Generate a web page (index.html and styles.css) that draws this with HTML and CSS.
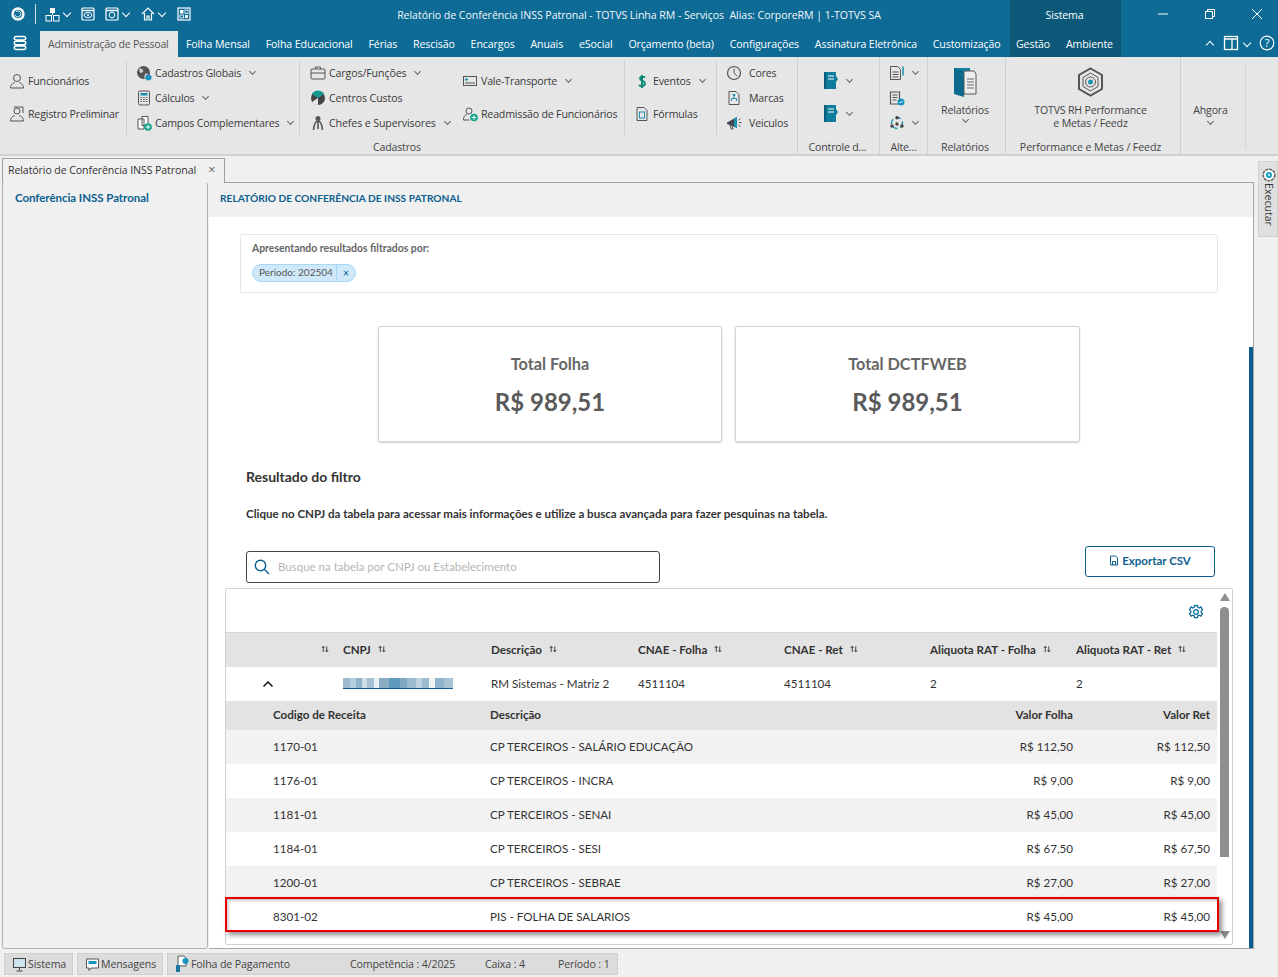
FILE: index.html
```html
<!DOCTYPE html>
<html lang="pt-BR">
<head>
<meta charset="utf-8">
<title>Relatório de Conferência INSS Patronal</title>
<link rel="stylesheet" href="styles.css">
</head>
<body>
<svg class="defs" width="0" height="0" aria-hidden="true">
  <symbol id="sort" viewBox="0 0 9 9"><path d="M2.5 8V2M1 3.4 2.5 1.4 4 3.4M6.5 1.5V7.5M5 5.8 6.5 7.8 8 5.8" fill="none" stroke="#333" stroke-width="1"/></symbol>
  <symbol id="book" viewBox="0 0 16 20"><path d="M1 1h12v17H1z" fill="#0f7c9e"/><path d="M1 1h2v17H1z" fill="#0a5c78"/><path d="M5 5h6M5 8h6" stroke="#fff"/><path d="M13 5l2 3-2 3z" fill="#0f7c9e"/></symbol>
</svg>
<div class="app">
  <header class="chrome">
    <div class="titlebar">
      <div class="quick">
        <svg class="ql-logo" width="16" height="16" viewBox="0 0 16 16"><circle cx="8" cy="8" r="5.500" fill="none" stroke="#fff" stroke-width="2.400"/><path d="M6 5.500a3 3 0 1 1-1.200 3" fill="none" stroke="#fff" stroke-width="1"/></svg>
        <span class="ql-sep"></span>
        <svg class="ql-a" width="15" height="15" viewBox="0 0 15 15"><rect x="5" y="1" width="5" height="5" fill="#fff"/><rect x="1" y="8.500" width="5.500" height="5.500" fill="none" stroke="#fff"/><rect x="8.500" y="8.500" width="5.500" height="5.500" fill="none" stroke="#fff"/><path d="M7.500 6v2" stroke="#fff"/></svg>
        <span class="chev light"></span>
        <svg class="ql-b" width="14" height="14" viewBox="0 0 14 14"><rect x="1" y="1" width="12" height="12" rx="1" fill="none" stroke="#fff" stroke-width="1.200"/><path d="M1 3.500h12" stroke="#fff" stroke-width="1.500"/><ellipse cx="7" cy="8" rx="4" ry="2.500" fill="none" stroke="#fff"/><circle cx="7" cy="8" r="1" fill="#fff"/></svg>
        <svg class="ql-c" width="14" height="14" viewBox="0 0 14 14"><rect x="1" y="1" width="12" height="12" rx="1" fill="none" stroke="#fff" stroke-width="1.200"/><path d="M1 3.500h12" stroke="#fff" stroke-width="1.500"/><circle cx="7" cy="8" r="2.800" fill="none" stroke="#fff"/></svg>
        <span class="chev light"></span>
        <svg class="ql-d" width="14" height="14" viewBox="0 0 14 14"><path d="M1 7 7 1l6 6M3.500 6v7h2.500V9h2v4h2.500V6" fill="none" stroke="#fff" stroke-width="1.200"/></svg>
        <span class="chev light"></span>
        <svg class="ql-e" width="14" height="14" viewBox="0 0 14 14"><rect x="1" y="1" width="12" height="12" fill="none" stroke="#fff" stroke-width="1.200"/><rect x="3" y="3" width="3.500" height="3.500" fill="#fff"/><rect x="8" y="3" width="3" height="3.500" fill="none" stroke="#fff" stroke-width=".8"/><rect x="3" y="8" width="3.500" height="3" fill="none" stroke="#fff" stroke-width=".8"/><rect x="8" y="8" width="3" height="3" fill="#fff"/></svg>
      </div>
      <div class="doc-title">Relatório de Conferência INSS Patronal - TOTVS Linha RM - Serviços&nbsp; Alias: CorporeRM | 1-TOTVS SA</div>
      <div class="ctx">Sistema</div>
      <div class="winctl">
        <svg width="12" height="12" viewBox="0 0 12 12"><path d="M1 6h10" stroke="#fff"/></svg>
        <svg width="12" height="12" viewBox="0 0 12 12"><rect x="1.500" y="3.500" width="7" height="7" fill="none" stroke="#fff"/><path d="M3.500 3.500v-2h7v7h-2" fill="none" stroke="#fff"/></svg>
        <svg width="12" height="12" viewBox="0 0 12 12"><path d="M1 1l10 10M11 1 1 11" stroke="#fff"/></svg>
      </div>
    </div>
    <nav class="menubar">
      <div class="app-btn"><svg width="14" height="16" viewBox="0 0 14 16"><path d="M3 1.500h8a1.500 1.500 0 0 1 0 3.500H3a1.500 1.500 0 0 1 0-3.500zM3 6.300h8a1.500 1.500 0 0 1 0 3.500H3a1.500 1.500 0 0 1 0-3.500zM3 11h8a1.500 1.500 0 0 1 0 3.500H3A1.500 1.500 0 0 1 3 11z" fill="none" stroke="#fff" stroke-width="1.500"/></svg></div>
      <ul class="menu">
        <li class="active">Administração de Pessoal</li>
        <li>Folha Mensal</li>
        <li>Folha Educacional</li>
        <li>Férias</li>
        <li>Rescisão</li>
        <li>Encargos</li>
        <li>Anuais</li>
        <li>eSocial</li>
        <li>Orçamento (beta)</li>
        <li>Configurações</li>
        <li>Assinatura Eletrônica</li>
        <li>Customização</li>
      </ul>
      <ul class="menu ctx-menu">
        <li>Gestão</li>
        <li>Ambiente</li>
      </ul>
      <div class="menu-right">
        <span class="chev light up"></span>
        <svg width="16" height="16" viewBox="0 0 16 16"><rect x="1.500" y="1.500" width="13" height="13" fill="none" stroke="#fff" stroke-width="1.300"/><path d="M1.500 4h13M9 4v10" stroke="#fff" stroke-width="1.300"/></svg>
        <span class="chev light"></span>
        <svg class="help" width="16" height="16" viewBox="0 0 16 16"><circle cx="8" cy="8" r="6.800" fill="none" stroke="#fff" stroke-width="1.200"/><text x="8" y="11.800" text-anchor="middle" class="qmark">?</text></svg>
      </div>
    </nav>
    <section class="ribbon">
      <div class="rgroup g-cad">
        <div class="rbody">
          <div class="rcol two c1">
            <div class="ritem"><svg width="16" height="16" viewBox="0 0 16 16"><circle cx="8" cy="5" r="3.500" fill="none" stroke="#555"/><path d="M1.500 15c0-4 3-5 4.500-5.500M14.500 15c0-4-3-5-4.500-5.500M1.500 15h13" fill="none" stroke="#555"/></svg>Funcionários</div>
            <div class="ritem"><svg width="16" height="16" viewBox="0 0 16 16"><circle cx="8" cy="5" r="3" fill="none" stroke="#555"/><path d="M5 1h9v6" fill="none" stroke="#555"/><path d="M1.500 15c0-4 3-5 4.500-5.500M14.500 15c0-4-3-5-4.500-5.500M1.500 15h13" fill="none" stroke="#555"/></svg>Registro Preliminar</div>
          </div>
          <div class="rcol three c2">
            <div class="ritem"><svg width="16" height="16" viewBox="0 0 16 16"><circle cx="7.500" cy="7.500" r="6.500" fill="#555"/><path d="M3 4c2-1 3 0 4 1s-1 3-2 3-2-2-2-4zM9 9c2-1 3 0 3 1s-1 3-3 3 0-3 0-4z" fill="#ccc"/><circle cx="12.500" cy="12.500" r="3" fill="#1a93c0"/></svg>Cadastros Globais<span class="chev"></span></div>
            <div class="ritem"><svg width="16" height="16" viewBox="0 0 16 16"><rect x="2.500" y="1" width="11" height="14" rx="1.500" fill="none" stroke="#555"/><rect x="4.500" y="3" width="7" height="2.500" fill="#1a93b0"/><path d="M4.500 7.500h7M4.500 9.500h7M4.500 11.500h7" stroke="#555" stroke-dasharray="1.500 1.200"/></svg>Cálculos<span class="chev"></span></div>
            <div class="ritem"><svg width="16" height="16" viewBox="0 0 16 16"><path d="M2 4h6v10H2zM6 1.500h6v9H6z" fill="#fff" stroke="#555"/><circle cx="12" cy="12" r="3.800" fill="#12a58c"/><path d="M12 9.800v4.400M9.800 12h4.400" stroke="#fff"/></svg>Campos Complementares<span class="chev"></span></div>
          </div>
          <div class="rcol three c3">
            <div class="ritem"><svg width="16" height="16" viewBox="0 0 16 16"><rect x="1" y="4" width="14" height="10" rx="1" fill="none" stroke="#555"/><path d="M5.500 4V2h5v2M1 8h14" fill="none" stroke="#555"/></svg>Cargos/Funções<span class="chev"></span></div>
            <div class="ritem"><svg width="16" height="16" viewBox="0 0 16 16"><circle cx="8" cy="8" r="7" fill="#444"/><path d="M8 8 2 4a7 7 0 0 1 12 0z" fill="#16968f"/><path d="M8 8v7a7 7 0 0 1-6-3z" fill="#e8e8e8"/></svg>Centros Custos</div>
            <div class="ritem"><svg width="16" height="16" viewBox="0 0 16 16"><circle cx="8" cy="3.500" r="2.500" fill="#555"/><path d="M8 6c-3 0-4 4-4.500 9M8 6c3 0 4 4 4.500 9M8 7v7" fill="none" stroke="#555" stroke-width="1.600"/></svg>Chefes e Supervisores<span class="chev"></span></div>
          </div>
          <div class="rcol two c4">
            <div class="ritem"><svg width="16" height="16" viewBox="0 0 16 16"><rect x="1.500" y="3.500" width="13" height="9" fill="none" stroke="#555"/><rect x="3" y="5.500" width="3" height="2" fill="#1a93b0"/><path d="M3 10h10" stroke="#555"/></svg>Vale-Transporte<span class="chev"></span></div>
            <div class="ritem"><svg width="16" height="16" viewBox="0 0 16 16"><circle cx="7" cy="5" r="3" fill="none" stroke="#555"/><path d="M1.500 14c0-4 2-5 3.500-5.500" fill="none" stroke="#555"/><path d="M1.500 14h6" stroke="#555"/><circle cx="12" cy="11.500" r="3.800" fill="#12a58c"/><path d="M12 9.300v4.400M9.800 11.500h4.400" stroke="#fff"/></svg>Readmissão de Funcionários</div>
          </div>
          <div class="rcol two c5">
            <div class="ritem"><svg width="16" height="16" viewBox="0 0 16 16"><path d="M11 4.500C10 3.500 6 3 6 5.500S11 7.500 11 10.500 6.500 13.500 5 12M8 2v13" fill="none" stroke="#128a78" stroke-width="2"/></svg>Eventos<span class="chev"></span></div>
            <div class="ritem"><svg width="16" height="16" viewBox="0 0 16 16"><path d="M3 1.500h7l3 3v10H3z" fill="none" stroke="#555"/><rect x="5.500" y="6" width="5" height="6" fill="none" stroke="#1a93b0"/></svg>Fórmulas</div>
          </div>
          <div class="rcol three c6">
            <div class="ritem"><svg width="16" height="16" viewBox="0 0 16 16"><circle cx="8" cy="8" r="6.500" fill="none" stroke="#555" stroke-width="1.200"/><path d="M8 3.500V8l3 3" fill="none" stroke="#555"/></svg>Cores</div>
            <div class="ritem"><svg width="16" height="16" viewBox="0 0 16 16"><path d="M3 1.500h7l3 3v10H3z" fill="none" stroke="#555"/><path d="M8 5v3M5.500 11V8.500h5V11" fill="none" stroke="#1a93b0"/><rect x="6.800" y="4" width="2.400" height="2" fill="#1a93b0"/></svg>Marcas</div>
            <div class="ritem"><svg width="16" height="16" viewBox="0 0 16 16"><path d="M1 7.500 11 2v11L1 9z" fill="#445"/><path d="M8 3.500 11 2v11l-3-1.700z" fill="#1a93b0"/><path d="M12.500 5l2-1.500M13 7.500h2.500M12.500 10l2 1.500M4 10l1 4h2l-1-3.500" stroke="#555" fill="none"/></svg>Veiculos</div>
          </div>
        </div>
        <div class="rlabel">Cadastros</div>
      </div>
      <div class="rgroup g-ctl">
        <div class="rbody center">
          <div class="rcol two">
            <div class="ritem icon-only"><svg class="bk" width="16" height="20"><use href="#book"/></svg><span class="chev"></span></div>
            <div class="ritem icon-only"><svg class="bk" width="16" height="20"><use href="#book"/></svg><span class="chev"></span></div>
          </div>
        </div>
        <div class="rlabel">Controle d...</div>
      </div>
      <div class="rgroup g-alt">
        <div class="rbody center">
          <div class="rcol three">
            <div class="ritem icon-only"><svg width="16" height="16" viewBox="0 0 16 16"><path d="M1.500 1.500h7l3 3v10h-10z" fill="none" stroke="#555"/><path d="M3.500 7h6M3.500 9.500h6M3.500 12h6" stroke="#555"/><path d="M14 1.500v9" stroke="#1a93b0" stroke-width="1.500"/></svg><span class="chev"></span></div>
            <div class="ritem icon-only"><svg width="16" height="16" viewBox="0 0 16 16"><path d="M1.500 2h9v12h-9z" fill="none" stroke="#555" stroke-width="1.200"/><path d="M3.500 5h5M3.500 7.500h5M3.500 10h4" stroke="#555"/><circle cx="12" cy="12" r="3.500" fill="#1a93c0"/><path d="M10.500 12l1 1 2-2" stroke="#fff" fill="none"/></svg><span class="chev hidden"></span></div>
            <div class="ritem icon-only"><svg width="16" height="16" viewBox="0 0 16 16"><circle cx="8" cy="8" r="5.500" fill="none" stroke="#1a93b0" stroke-width="1.400" stroke-dasharray="5 3"/><circle cx="8" cy="2.800" r="1.700" fill="#444"/><circle cx="3" cy="11" r="1.700" fill="#444"/><circle cx="13" cy="11" r="1.700" fill="#444"/><circle cx="8" cy="9" r="1.700" fill="#444"/></svg><span class="chev"></span></div>
          </div>
        </div>
        <div class="rlabel">Alte...</div>
      </div>
      <div class="rgroup g-rel">
        <div class="rbody stack">
          <svg width="26" height="30" viewBox="0 0 26 30"><path d="M2 1h16v26H2z" fill="#0f86a8"/><path d="M2 1l10 3v26L2 27z" fill="#0c6b8c"/><path d="M12 4h10l2 3v20H12z" fill="#eee" stroke="#555"/><path d="M15 12h7M15 15h7M15 18h7M15 21h7" stroke="#666"/></svg>
          <div class="big-text">Relatórios</div>
          <span class="chev"></span>
        </div>
        <div class="rlabel">Relatórios</div>
      </div>
      <div class="rgroup g-perf">
        <div class="rbody stack">
          <svg width="27" height="30" viewBox="0 0 27 30"><path d="M13.500 1.500 25 8v14l-11.500 6.500L2 22V8z" fill="none" stroke="#555" stroke-width="2"/><path d="M13.500 6 21 10.500v9L13.500 24 6 19.500v-9z" fill="none" stroke="#555"/><circle cx="13.500" cy="15" r="5" fill="none" stroke="#555"/><circle cx="13.500" cy="15" r="2.500" fill="#1a93b0"/></svg>
          <div class="big-text">TOTVS RH Performance<br>e Metas / Feedz</div>
        </div>
        <div class="rlabel">Performance e Metas / Feedz</div>
      </div>
      <div class="rgroup g-ahg">
        <div class="rbody stack">
          <div class="big-text">Ahgora</div>
          <span class="chev"></span>
        </div>
      </div>
    </section>
  </header>

  <div class="workspace">
    <div class="docs">
      <div class="tabstrip">
        <div class="doc-tab">Relatório de Conferência INSS Patronal<span class="tab-x">×</span></div>
      </div>
      <div class="panes">
        <aside class="side"><a class="side-link">Conferência INSS Patronal</a></aside>
        <main class="report">
          <div class="report-head">RELATÓRIO DE CONFERÊNCIA DE INSS PATRONAL</div>
          <div class="report-body">
            <div class="filter-box">
              <div class="filter-title">Apresentando resultados filtrados por:</div>
              <div class="chip"><span class="chip-text">Periodo: 202504</span><span class="chip-x">×</span></div>
            </div>
            <div class="cards">
              <div class="card"><div class="card-title">Total Folha</div><div class="card-value">R$ 989,51</div></div>
              <div class="card"><div class="card-title">Total DCTFWEB</div><div class="card-value">R$ 989,51</div></div>
            </div>
            <div class="results">
              <h2 class="results-title">Resultado do filtro</h2>
              <p class="results-hint">Clique no CNPJ da tabela para acessar mais informações e utilize a busca avançada para fazer pesquinas na tabela.</p>
              <div class="toolbar">
                <div class="search">
                  <svg width="16" height="16" viewBox="0 0 16 16"><circle cx="6.500" cy="6.500" r="5.200" fill="none" stroke="#0c5f8f" stroke-width="1.400"/><path d="M10.500 10.500 15 15" stroke="#0c5f8f" stroke-width="1.400"/></svg>
                  <span>Busque na tabela por CNPJ ou Estabelecimento</span>
                </div>
                <button class="export"><svg width="10" height="11" viewBox="0 0 10 11"><path d="M1.500 1h5l2 2v7h-7z" fill="none" stroke="#0c5f8f"/><path d="M3.500 10V6.500h3V10" fill="none" stroke="#0c5f8f"/></svg>Exportar CSV</button>
              </div>
            </div>
            <div class="table-box">
              <div class="table-main">
                <div class="table-tools"><svg width="16" height="16" viewBox="0 0 16 16"><path d="M8 1.300l1.500.3.400 1.800 1.400.6 1.600-1 1.600 2.600-1.300 1.300v1.400l1.300 1.300-1.600 2.600-1.600-1-1.400.6-.4 1.800h-3l-.4-1.800-1.400-.6-1.600 1-1.600-2.600 1.300-1.300V6.900L1.500 5.600l1.600-2.600 1.600 1 1.400-.6.400-1.800z" fill="none" stroke="#0c6f9f" stroke-width="1.300"/><circle cx="8" cy="8" r="2.300" fill="none" stroke="#0c6f9f" stroke-width="1.300"/></svg></div>
                <div class="t-row t-head">
                  <div class="t-sort-only"><svg width="8" height="8"><use href="#sort"/></svg></div>
                  <div>CNPJ<svg width="8" height="8"><use href="#sort"/></svg></div>
                  <div>Descrição<svg width="8" height="8"><use href="#sort"/></svg></div>
                  <div>CNAE - Folha<svg width="8" height="8"><use href="#sort"/></svg></div>
                  <div>CNAE - Ret<svg width="8" height="8"><use href="#sort"/></svg></div>
                  <div>Aliquota RAT - Folha<svg width="8" height="8"><use href="#sort"/></svg></div>
                  <div>Aliquota RAT - Ret<svg width="8" height="8"><use href="#sort"/></svg></div>
                </div>
                <div class="t-row t-master">
                  <div class="t-toggle"><svg width="12" height="8" viewBox="0 0 12 8"><path d="M1.500 6.500 6 2l4.500 4.500" fill="none" stroke="#111" stroke-width="1.500"/></svg></div>
                  <div><a class="cnpj" aria-label="CNPJ oculto"></a></div>
                  <div>RM Sistemas - Matriz 2</div>
                  <div>4511104</div>
                  <div>4511104</div>
                  <div>2</div>
                  <div>2</div>
                </div>
                <div class="s-row s-head"><div>Codigo de Receita</div><div>Descrição</div><div class="num">Valor Folha</div><div class="num">Valor Ret</div></div>
                <div class="s-row alt"><div>1170-01</div><div>CP TERCEIROS - SALÁRIO EDUCAÇÃO</div><div class="num">R$ 112,50</div><div class="num">R$ 112,50</div></div>
                <div class="s-row"><div>1176-01</div><div>CP TERCEIROS - INCRA</div><div class="num">R$ 9,00</div><div class="num">R$ 9,00</div></div>
                <div class="s-row alt"><div>1181-01</div><div>CP TERCEIROS - SENAI</div><div class="num">R$ 45,00</div><div class="num">R$ 45,00</div></div>
                <div class="s-row"><div>1184-01</div><div>CP TERCEIROS - SESI</div><div class="num">R$ 67,50</div><div class="num">R$ 67,50</div></div>
                <div class="s-row alt"><div>1200-01</div><div>CP TERCEIROS - SEBRAE</div><div class="num">R$ 27,00</div><div class="num">R$ 27,00</div></div>
                <div class="s-row"><div>8301-02</div><div>PIS - FOLHA DE SALARIOS</div><div class="num">R$ 45,00</div><div class="num">R$ 45,00</div></div>
              </div>
              <div class="table-scroll">
                <span class="arrow-up"></span>
                <span class="thumb"></span>
                <span class="arrow-down"></span>
              </div>
              <div class="highlight"></div>
            </div>
          </div>
          <div class="page-scroll"></div>
        </main>
      </div>
    </div>
    <div class="rail">
      <div class="exec">
        <svg width="16" height="16" viewBox="0 0 16 16"><circle cx="8" cy="8" r="5.800" fill="#fff" stroke="#666" stroke-width="1.600" stroke-dasharray="3 .8"/><circle cx="8" cy="8" r="3" fill="#17a0c0"/><circle cx="8" cy="8" r="1" fill="#fff"/></svg>
        <span class="exec-text">Executar</span>
      </div>
    </div>
  </div>

  <footer class="status">
    <div class="st-btn st1"><svg width="15" height="15" viewBox="0 0 15 15"><rect x="1.500" y="1.500" width="12" height="9" fill="#cfe3ee" stroke="#444"/><path d="M7.500 10.500v3M4.500 14h6" stroke="#444"/></svg>Sistema</div>
    <div class="st-btn st2"><svg width="15" height="15" viewBox="0 0 15 15"><path d="M1.500 2h12v9H6l-2 2.500V11H1.500z" fill="#fff" stroke="#555"/><rect x="3.500" y="4" width="8" height="3" fill="#1a93c0"/></svg>Mensagens</div>
    <div class="st-btn st3"><svg width="15" height="18" viewBox="0 0 15 18"><path d="M3 1h6l2 2v8H3z" fill="#fff" stroke="#555"/><circle cx="10.500" cy="6" r="3" fill="#1a93c0"/><rect x="1" y="10" width="4" height="7" fill="#1a78a0"/></svg><span class="st-name">Folha de Pagamento</span><span class="st-a">Competência : 4/2025</span><span class="st-b">Caixa : 4</span><span class="st-c">Período : 1</span></div>
  </footer>
</div>
</body>
</html>
```

FILE: styles.css
```css
* { box-sizing: border-box; }
html, body { margin: 0; padding: 0; height: 100%; overflow: hidden; }
body { font-family: "Open Sans", "Noto Sans", sans-serif; font-size: 11px; color: #3a3a3a; background: #f0f0f0; }
.defs { position: absolute; }
.app { height: 977px; display: flex; flex-direction: column; }

/* title bar */
.chrome { flex: none; }
.titlebar { height: 28px; background: #0e6b96; display: flex; color: #fff; }
.quick { width: 268px; display: flex; align-items: center; padding-left: 10px; }
.ql-sep { width: 1px; height: 20px; background: #cfe0ea; margin: 0 9px 0 9px; }
.quick .chev { margin: -3px 0 0 4px; }
.ql-b { margin-left: 11px; }
.ql-c { margin-left: 10px; }
.ql-d { margin-left: 12px; }
.ql-e { margin-left: 12px; }
.doc-title { flex: 1; text-align: center; line-height: 30px; font-size: 10.600px; letter-spacing: -.06px; white-space: nowrap; color: #f2f7fa; }
.ctx { width: 111px; background: #0c5878; text-align: center; line-height: 30px; font-size: 10.600px; letter-spacing: -.15px; padding-right: 2px; }
.winctl { width: 157px; display: flex; align-items: center; padding-left: 36px; gap: 35px; }

/* menu */
.menubar { height: 29px; background: #0e6b96; display: flex; align-items: stretch; color: #fff; }
.app-btn { width: 40px; display: flex; align-items: center; justify-content: center; }
.menu { list-style: none; display: flex; margin: 0; padding: 0; width: 970px; }
.menu li { padding: 0 7.900px; line-height: 32px; white-space: nowrap; font-size: 10.600px; letter-spacing: -.1px; }
.menu li.active { background: #e6e6e6; color: #555; margin-top: 3px; line-height: 26px; letter-spacing: -.25px; width: 138px; padding: 0 0 0 8px; }
.ctx-menu { width: 111px; background: #0c5878; padding-left: 0; }
.ctx-menu li:first-child { padding-left: 6px; }
.menu-right { flex: 1; display: flex; align-items: center; padding-left: 86px; gap: 5px; }
.menu-right .up { margin-right: 5px; }
.menu-right .help { margin-left: 4px; }
.qmark { font: 11px "Open Sans", sans-serif; fill: #fff; }

/* ribbon */
.ribbon { height: 99px; background: #e6e6e6; border-bottom: 2px solid #d0d0d0; display: flex; letter-spacing: -.18px; }
.rgroup { display: flex; flex-direction: column; border-right: 1px solid #cfcfcf; margin: 0; }
.g-cad { width: 798px; }
.g-cad .rlabel { padding-right: 3px; }
.g-ctl { width: 82px; }
.g-alt { width: 48px; }
.g-rel { width: 78px; padding-right: 3px; }
.g-perf { width: 175px; padding-right: 5px; }
.g-perf .rlabel { letter-spacing: -.1px; }
.g-ahg { width: 65px; margin-top: 4px; height: 88px; border-right-color: #d5d5d5; padding-right: 5px; }
.g-ctl .rlabel { padding-right: 2px; }
.rbody { height: 85px; display: flex; padding-top: 4px; }
.rlabel { text-align: center; font-size: 10.600px; line-height: 14px; color: #444; white-space: nowrap; }
.rcol { height: 74px; display: flex; flex-direction: column; justify-content: center; border-right: 1px solid #cfcfcf; }
.rcol.two { gap: 12px; padding-bottom: 2px; }
.rcol .ritem { height: 25px; display: flex; align-items: center; white-space: nowrap; font-size: 10.600px; }
.rcol.two .ritem { height: 21px; }
.ritem svg { margin-right: 3px; flex: none; }
.ritem .chev { margin-left: 9px; margin-top: -3px; width: 5px; height: 5px; }
.c1 { width: 127px; padding-left: 9px; }
.c2 { width: 173px; padding-left: 9px; }
.c3 { width: 162px; padding-left: 10px; border-right: 0; letter-spacing: -.1px; }
.c4 { width: 163px; padding-left: 0; }
.c5 { width: 92px; padding-left: 9px; }
.c6 { width: 80px; padding-left: 9px; border-right: 0; }
.c6 .ritem svg { margin-right: 7px; }
.center { justify-content: center; }
.center .rcol { border: 0; }
.icon-only .chev { margin-left: 5px; }
.g-ctl .icon-only .chev { margin-left: 5px; }
.g-ctl .rcol { padding-right: 2px; }
.icon-only .bk { margin-right: 3px; }
.hidden { visibility: hidden; }
.stack { flex-direction: column; align-items: center; padding-top: 10px; }
.big-text { text-align: center; line-height: 13px; font-size: 10.600px; margin-top: 7px; color: #444; white-space: nowrap; }
.stack > .chev { margin-top: 0; width: 5px; height: 5px; }
.g-ahg .stack { padding-top: 43px; }
.g-ahg .big-text { margin-top: 0; }
.g-ahg .stack > .chev { margin-top: 2px; }

.chev { display: inline-block; width: 6px; height: 6px; border-right: 1px solid #666; border-bottom: 1px solid #666; transform: rotate(45deg); flex: none; }
.chev.light { border-color: #fff; width: 6px; height: 6px; }
.chev.up { transform: rotate(225deg); margin-top: 4px; }

/* workspace */
.workspace { height: 793px; display: flex; }
.docs { width: 1254px; display: flex; flex-direction: column; }
.tabstrip { height: 26px; padding: 2px 0 0 2px; flex: none; }
.doc-tab { width: 223px; height: 25px; background: #f0f0f0; border: 1px solid #a0a0a0; border-bottom: 0; position: relative; z-index: 1; padding-left: 5px; line-height: 20px; font-size: 10.600px; letter-spacing: -.1px; color: #333; white-space: nowrap; }
.tab-x { margin-left: 12px; font-size: 13px; color: #666; }
.panes { height: 767px; display: flex; gap: 1px; padding-left: 2px; }
.side { width: 206px; background: #f0f0f0; border: 1px solid #b0b0b0; border-radius: 3px; padding: 7px 12px; }
.side-link { color: #0c5f8f; font: 700 11.500px Lato, "Open Sans", sans-serif; letter-spacing: -.05px; }
.report { flex: 1; background: #fff; border: 1px solid #a5a5a5; border-left: 0; position: relative; overflow: hidden; font-family: Lato, "Open Sans", sans-serif; }
.report-head { height: 34px; background: #f0f0f0; padding-left: 11px; line-height: 31px; font-size: 10.200px; font-weight: 700; color: #0c5f8f; }
.report-body { padding-top: 17px; }
.page-scroll { position: absolute; right: 0; bottom: 0; width: 4px; height: 601px; background: #085d8e; }

.filter-box { margin: 0 35px 0 31px; height: 59px; border: 1px solid #e6e6e6; border-radius: 2px; padding: 7px 11px; }
.filter-title { font-size: 10.400px; font-weight: 700; color: #666; line-height: 13px; }
.chip { display: inline-flex; margin-top: 9px; height: 18px; background: #cfe9fb; border: 1px solid #a6d8f6; border-radius: 9px; line-height: 15px; font-size: 10px; color: #555; }
.chip-text { padding: 0 3px 0 6px; }
.chip-x { border-left: 1px solid #a6d8f6; width: 19px; text-align: center; color: #0c5f8f; font-size: 11px; }

.cards { display: flex; gap: 13px; margin: 33px 0 0 169px; }
.card { width: 344px; height: 116px; border: 1px solid #d2d2d2; border-radius: 2px; box-shadow: 0 1px 2px rgba(0,0,0,.18); text-align: center; color: #555; }
.card + .card { width: 345px; }
.card-title { margin-top: 26px; font-size: 16.300px; font-weight: 700; line-height: 22px; color: #666; }
.card-value { margin-top: 11px; font-size: 24px; font-weight: 700; line-height: 32px; color: #5a5a5a; }

.results { padding: 25px 38px 0 37px; }
.results-title { margin: 0; font-size: 14px; line-height: 20px; font-weight: 700; color: #333; }
.results-hint { margin: 19px 0 0; font-size: 11.550px; line-height: 16px; font-weight: 700; color: #333; white-space: nowrap; }
.toolbar { margin-top: 24px; height: 37px; display: flex; justify-content: space-between; align-items: flex-start; }
.search { width: 414px; height: 32px; margin-top: 5px; border: 1px solid #444; border-radius: 3px; display: flex; align-items: center; padding: 0 0 0 7px; gap: 8px; font-size: 11.500px; color: #b5b5b5; }
.search span { padding-bottom: 2px; }
.export { width: 130px; height: 31px; background: #fff; border: 1px solid #0c5f8f; border-radius: 3px; color: #0c5f8f; font: 700 11.500px Lato, sans-serif; display: flex; align-items: center; justify-content: center; gap: 3px; padding: 0 0 2px; }

.table-box { position: relative; margin: 5px 0 0 16px; width: 1008px; height: 357px; border: 1px solid #d0d0d0; border-radius: 2px; display: flex; }
.table-main { width: 991px; font-size: 11.600px; color: #333; }
.table-tools { height: 43px; display: flex; justify-content: flex-end; align-items: center; padding: 2px 13px 0 0; }
.t-row { display: grid; grid-template-columns: 117px 148px 147px 146px 146px 146px 1fr; align-items: center; padding-bottom: 2px; }
.t-head { height: 35px; background: #e3e3e3; font-weight: 700; border-top: 1px solid #d5d5d5; color: #333; }
.t-head svg { margin-left: 7px; vertical-align: 1px; }
.t-sort-only { text-align: right; padding-right: 14px; }
.t-master { height: 34px; background: #fff; padding-bottom: 1px; }
.t-toggle { padding-left: 36px; line-height: 0; }
.cnpj { display: block; width: 110px; height: 11px; border-bottom: 1px solid #0c5f8f; background: linear-gradient(90deg, #9dbcd0 0 6%, #b7cedd 6% 12%, #8fb4cb 12% 17%, #cfdde6 17% 22%, #a3c0d2 22% 28%, #e8eff4 28% 33%, #8aadc4 33% 42%, #5f9bbd 42% 52%, #7fa9c3 52% 58%, #9dbcd0 58% 66%, #bcd0dd 66% 72%, #9dbcd0 72% 78%, #f0f4f7 78% 84%, #8fb4cb 84% 92%, #a9c4d5 92% 100%); }
.s-row { height: 34px; display: grid; grid-template-columns: 217px 1fr 120px 137px; align-items: center; padding: 0 7px 2px 47px; background: #fff; }
.s-row.alt { background: #f2f2f2; }
.s-head { height: 29px; background: #e3e3e3; font-weight: 700; }
.num { text-align: right; }
.table-scroll { flex: 1; position: relative; display: flex; flex-direction: column; align-items: center; }
.arrow-up { margin-top: 4px; border: 5px solid transparent; border-top: 0; border-bottom: 8px solid #8f8f8f; }
.thumb { margin-top: 6px; width: 9px; height: 250px; background: #8f8f8f; border-radius: 5px 5px 0 0; }
.arrow-down { margin-top: auto; margin-bottom: 5px; border: 5px solid transparent; border-bottom: 0; border-top: 8px solid #8f8f8f; }
.highlight { position: absolute; left: -1px; top: 308px; width: 994px; height: 35px; border: 2px solid #e60000; box-shadow: 3px 3px 5px rgba(0,0,0,.45), inset 2px 2px 3px rgba(0,0,0,.18); }

/* rail */
.rail { flex: 1; padding: 5px 0 0 4px; }
.exec { width: 20px; height: 76px; background: #e0e0e0; border: 1px solid #d0d0d0; display: flex; flex-direction: column; align-items: center; padding: 5px 0 0 1px; }
.exec-text { writing-mode: vertical-rl; font-size: 10.600px; color: #333; }

/* status */
.status { height: 28px; padding: 4px 0 0 4px; display: flex; gap: 4px; }
.st-btn { height: 22px; background: #dcdcdc; border: 1px solid #d0d0d0; display: flex; align-items: center; padding-left: 7px; font-size: 10.600px; letter-spacing: -.12px; color: #444; white-space: nowrap; }
.st-btn svg { margin-right: 1px; flex: none; }
.st1 { width: 69px; }
.st2 { width: 86px; }
.st3 { width: 451px; }
.st-name { width: 159px; }
.st-a { width: 135px; }
.st-b { width: 73px; }
```
